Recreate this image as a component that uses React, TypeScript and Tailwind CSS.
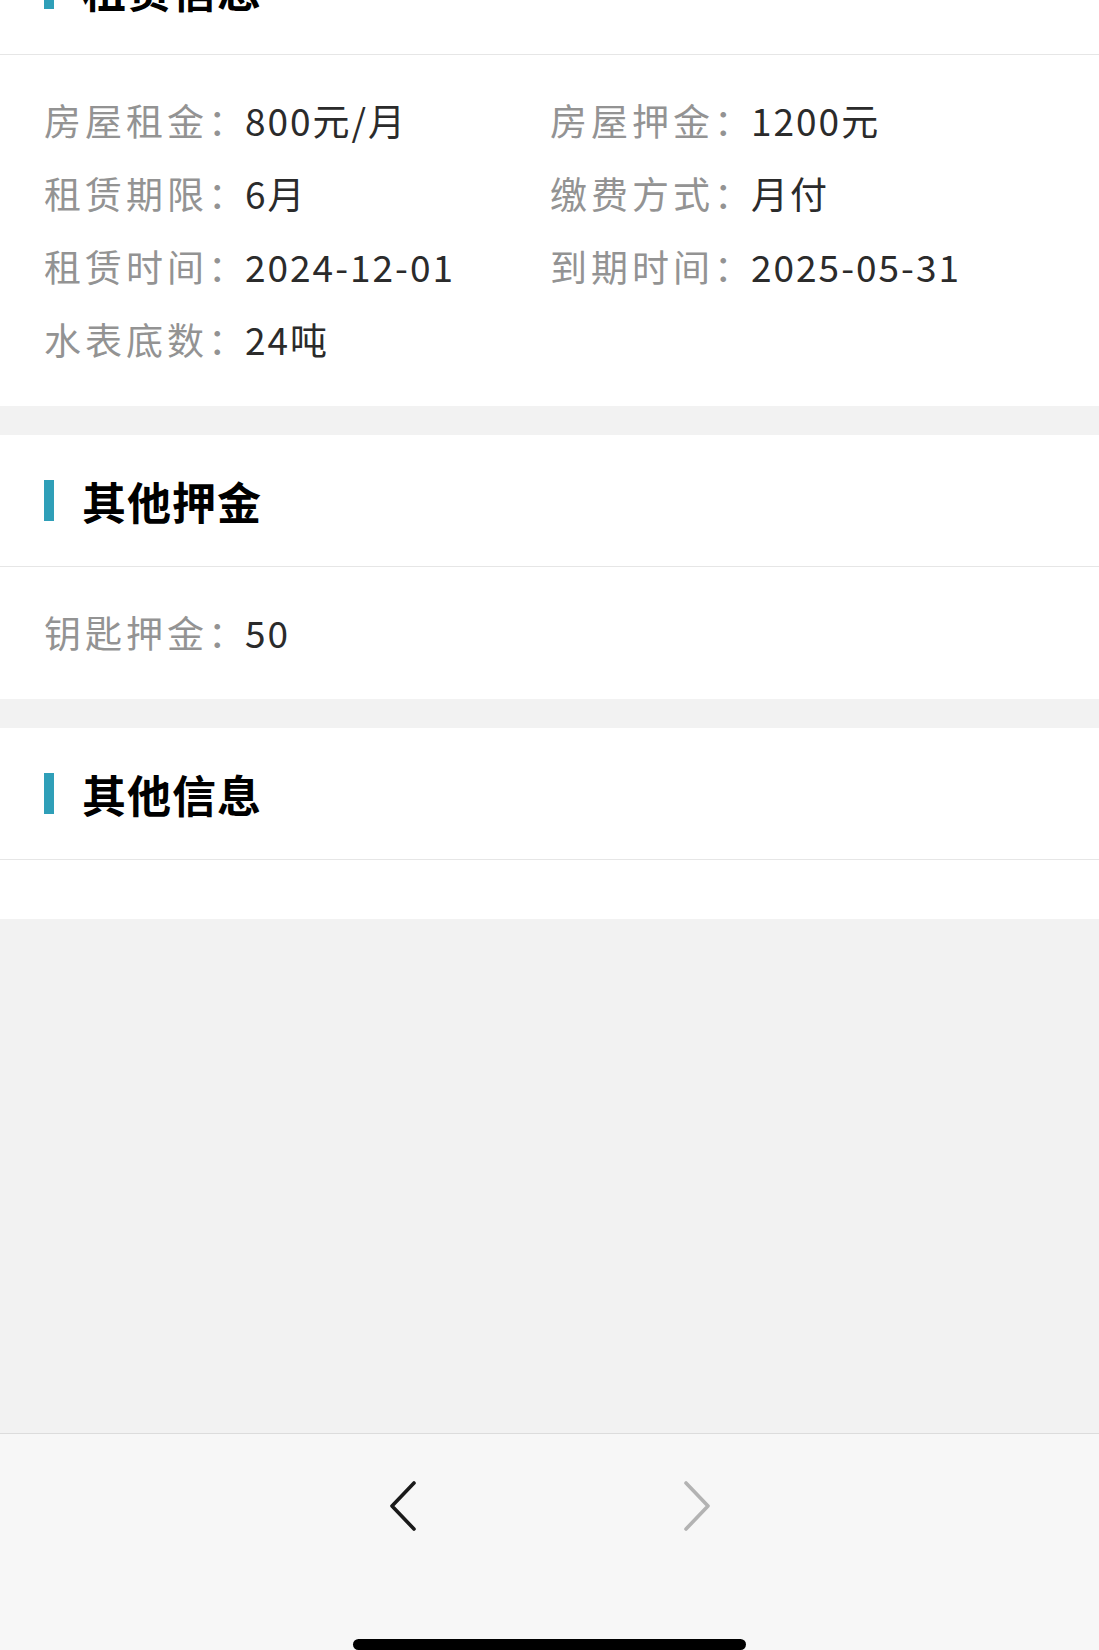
import React from "react";

type Field = { label: string; value: string };

const leaseFields: Field[] = [
  { label: "房屋租金", value: "800元/月" },
  { label: "房屋押金", value: "1200元" },
  { label: "租赁期限", value: "6月" },
  { label: "缴费方式", value: "月付" },
  { label: "租赁时间", value: "2024-12-01" },
  { label: "到期时间", value: "2025-05-31" },
  { label: "水表底数", value: "24吨" },
];

const depositFields: Field[] = [{ label: "钥匙押金", value: "50" }];

function SectionTitle({ title }: { title: string }) {
  return (
    <div className="h-[132px] flex items-center pl-[44px] border-b border-[#e6e6e6]">
      <span className="w-[10px] h-[41px] bg-[#2f9fb8]" />
      <h2 className="ml-[28px] text-[44px] font-bold text-black leading-none tracking-[1px]">{title}</h2>
    </div>
  );
}

function FieldRow({ field }: { field: Field }) {
  return (
    <div className="h-[73px] flex items-center text-[37px] whitespace-nowrap">
      <span className="text-[#939393] tracking-[4px]">{field.label}</span>
      <span className="text-[#939393]">：</span>
      <span className="text-[#2b2b2b] tracking-[2px]">{field.value}</span>
    </div>
  );
}

function Section({ title, fields }: { title: string; fields: Field[] }) {
  return (
    <section className="bg-white">
      <SectionTitle title={title} />
      {fields.length > 0 ? (
        <div className="grid grid-cols-2 pl-[44px] pr-[43px] pt-[29px] pb-[30px]">
          {fields.map((f) => (
            <FieldRow key={f.label} field={f} />
          ))}
        </div>
      ) : (
        <div className="h-[59px]" />
      )}
    </section>
  );
}

function Chevron({ dir, color }: { dir: "left" | "right"; color: string }) {
  return (
    <svg width="28" height="50" viewBox="0 0 28 50" fill="none">
      <path
        d={dir === "left" ? "M25 2 L3 25 L25 48" : "M3 2 L25 25 L3 48"}
        stroke={color}
        strokeWidth="3.6"
        strokeLinecap="round"
        strokeLinejoin="round"
      />
    </svg>
  );
}

export default function App() {
  return (
    <div
      className="h-[1650px] w-full overflow-hidden bg-[#f2f2f2] flex flex-col"
      style={{ fontFamily: '"Noto Sans CJK SC", "Noto Sans", sans-serif' }}
    >
      <main className="flex-1 overflow-hidden">
        <div className="-mt-[77px] flex flex-col gap-[29px]">
          <Section title="租赁信息" fields={leaseFields} />
          <Section title="其他押金" fields={depositFields} />
          <Section title="其他信息" fields={[]} />
        </div>
      </main>

      <footer className="h-[217px] shrink-0 bg-[#f7f7f7] border-t border-[#dcdcdc] flex flex-col items-center">
        <div className="mt-[47px] flex items-center gap-[266px]">
          <Chevron dir="left" color="#1a1a1a" />
          <Chevron dir="right" color="#b3b3b3" />
        </div>
        <div className="mt-[108px] w-[393px] h-[15px] rounded-full bg-black" />
      </footer>
    </div>
  );
}
